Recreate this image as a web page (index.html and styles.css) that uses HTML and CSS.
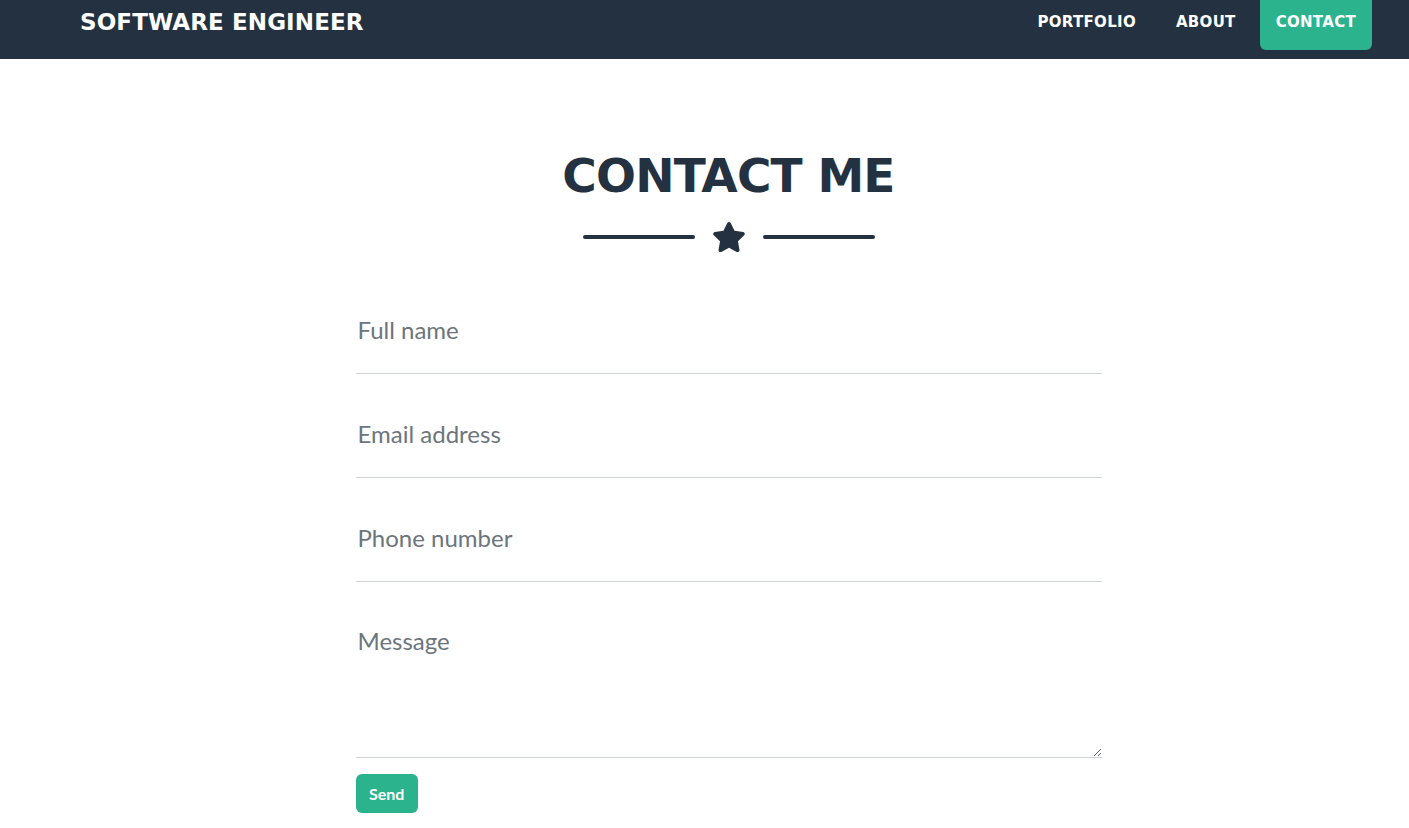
FILE: index.html
```html
<!DOCTYPE html>
<html lang="en">
<head>
<meta charset="utf-8">
<title>Contact</title>
<link rel="stylesheet" href="styles.css">
</head>
<body>
<nav class="navbar">
  <a class="brand" href="#">SOFTWARE ENGINEER</a>
  <ul class="nav-links">
    <li><a class="nav-link" href="#">PORTFOLIO</a></li>
    <li><a class="nav-link" href="#">ABOUT</a></li>
    <li><a class="nav-link active" href="#">CONTACT</a></li>
  </ul>
</nav>
<main class="page">
  <section class="contact">
    <h2 class="title">CONTACT ME</h2>
    <div class="divider">
      <span class="divider-line"></span>
      <svg class="divider-star" viewBox="0 0 576 512" aria-hidden="true"><path d="M259.3 17.8L194 150.2 47.9 171.5c-26.2 3.8-36.7 36.1-17.7 54.6l105.7 103-25 145.5c-4.5 26.3 23.2 46 46.4 33.7L288 439.6l130.7 68.7c23.2 12.2 50.9-7.4 46.4-33.7l-25-145.5 105.7-103c19-18.5 8.5-50.8-17.7-54.6L382 150.2 316.7 17.8c-11.7-23.6-45.6-23.9-57.4 0z"/></svg>
      <span class="divider-line"></span>
    </div>
    <form class="form">
      <input class="field" type="text" placeholder="Full name">
      <input class="field" type="email" placeholder="Email address">
      <input class="field" type="tel" placeholder="Phone number">
      <textarea class="field field-area" placeholder="Message"></textarea>
      <button class="btn-send" type="button">Send</button>
    </form>
  </section>
</main>
</body>
</html>
```
FILE: styles.css
```css
* { box-sizing: border-box; }
html, body { margin: 0; padding: 0; }
body {
  font-family: Lato, "Liberation Sans", sans-serif;
  background: #ffffff;
  color: #233140;
}
.navbar {
  height: 59px;
  background: #233140;
  display: flex;
  align-items: flex-start;
  justify-content: space-between;
  padding: 0 37px 0 80px;
}
.brand {
  font-family: "DejaVu Sans", sans-serif;
  font-weight: 700;
  font-size: 23px;
  line-height: 44px;
  color: #fff;
  text-decoration: none;
  letter-spacing: 0.1px;
}
.nav-links {
  display: flex;
  list-style: none;
  margin: 0;
  padding: 0;
  gap: 8px;
}
.nav-link {
  display: block;
  font-family: "DejaVu Sans", sans-serif;
  font-weight: 700;
  font-size: 15px;
  letter-spacing: 0.3px;
  line-height: 45px;
  height: 50px;
  padding: 0 16px;
  color: #fff;
  text-decoration: none;
  border-radius: 0 0 6px 6px;
}
.nav-link.active { background: #2ab38d; }
.page {
  padding-left: 48px;
  display: flex;
  justify-content: center;
}
.contact {
  width: 746px;
  padding-top: 88px;
  display: flex;
  flex-direction: column;
  align-items: center;
}
.title {
  margin: 0;
  font-family: "DejaVu Sans", sans-serif;
  font-weight: 700;
  font-size: 47px;
  letter-spacing: -0.8px;
  line-height: 58px;
  color: #233140;
}
.divider {
  display: flex;
  align-items: center;
  gap: 17px;
  margin-top: 16px;
}
.divider-line {
  width: 112px;
  height: 4px;
  border-radius: 2px;
  background: #233140;
}
.divider-star {
  width: 34px;
  height: 32px;
  fill: #233140;
}
.form {
  width: 100%;
  margin-top: 17px;
  display: flex;
  flex-direction: column;
  align-items: flex-start;
}
.field {
  display: block;
  width: 100%;
  height: 104px;
  margin: 0;
  padding: 44px 2px 29px;
  border: 0;
  border-bottom: 1px solid #ced4da;
  border-radius: 0;
  font-family: Lato, sans-serif;
  font-size: 24px;
  line-height: 30px;
  color: #233140;
  background: transparent;
  outline: none;
}
.field::placeholder { color: #6c757d; opacity: 1; }
.field-area {
  height: 176px;
  resize: vertical;
}
.btn-send {
  margin-top: 16px;
  height: 39px;
  padding: 0 13.5px;
  border: 0;
  border-radius: 6px;
  background: #2ab38d;
  color: #fff;
  font-family: Lato, sans-serif;
  font-weight: 700;
  font-size: 16px;
}
```
